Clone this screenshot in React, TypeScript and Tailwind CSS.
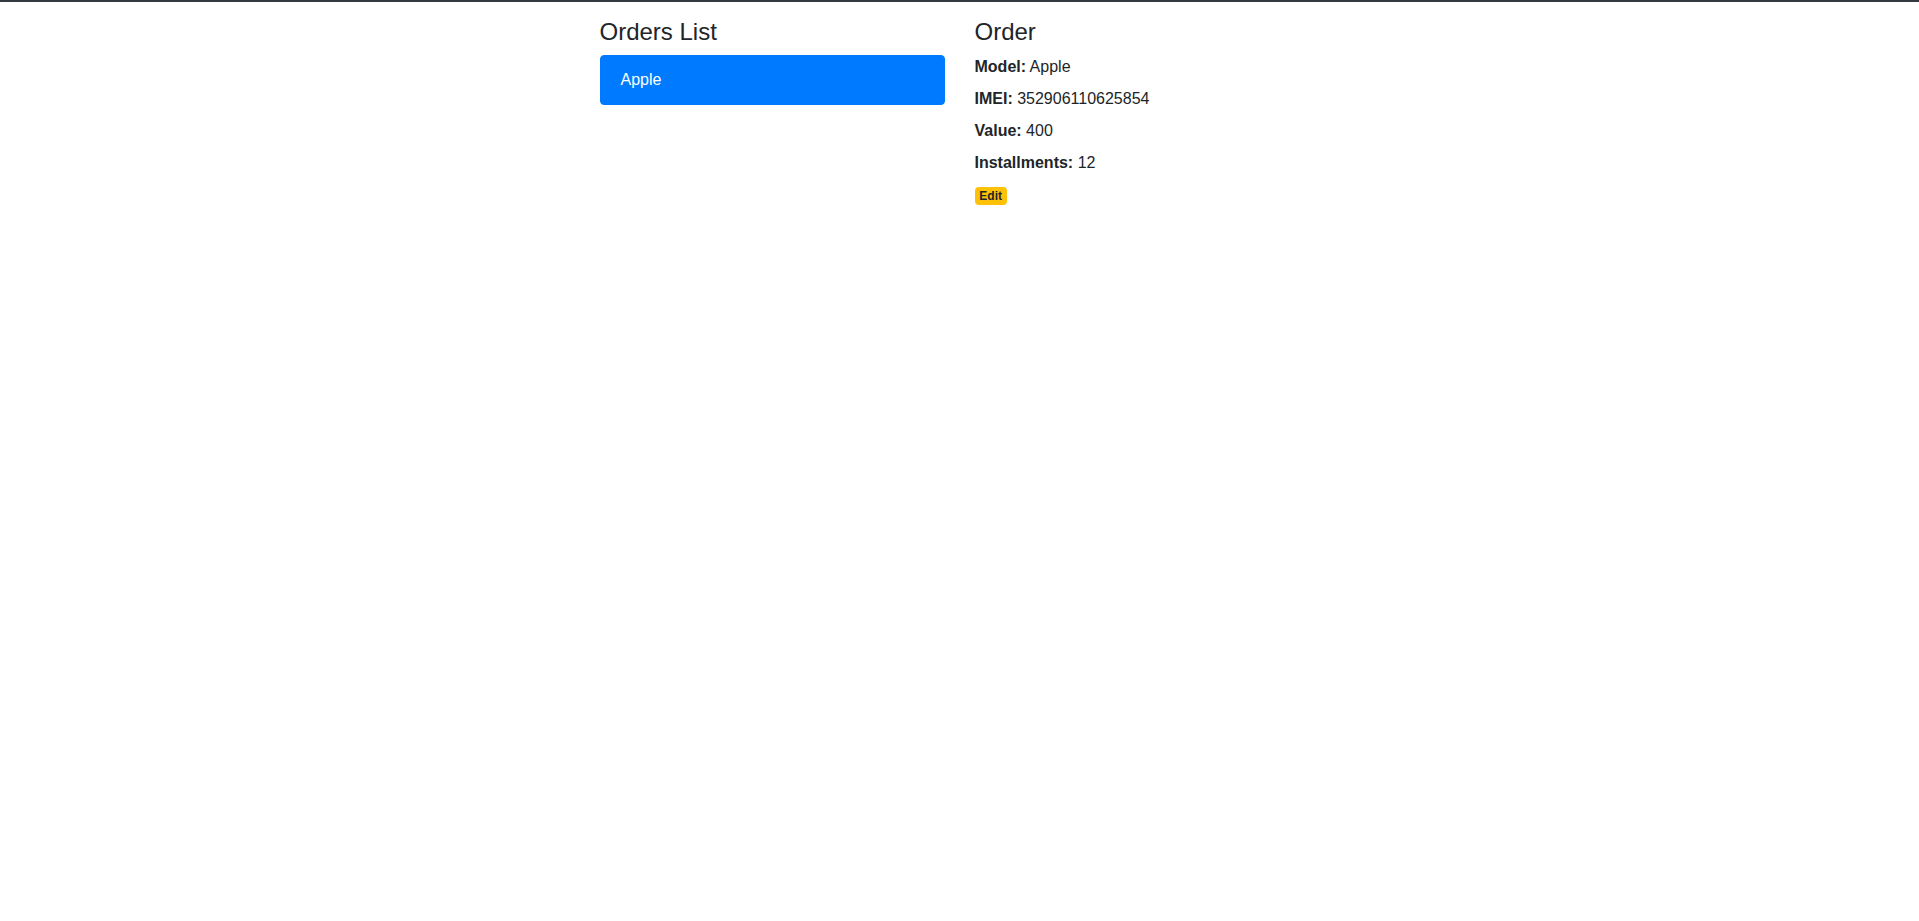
import React from "react";

export default function App() {
  return (
    <div className="min-h-screen bg-white font-['Liberation_Sans',Arial,sans-serif] text-base leading-6 text-[#212529]">
      <div className="h-[2px] bg-[#343a40]" />
      <div className="mx-auto mt-4 flex max-w-[750px]">
        <div className="w-1/2 px-[15px]">
          <h4 className="mb-2 text-2xl font-medium leading-[1.2]">Orders List</h4>
          <ul className="flex flex-col">
            <li className="rounded-[4px] border border-[#007bff] bg-[#007bff] px-5 py-3 text-white">
              Apple
            </li>
          </ul>
        </div>
        <div className="w-1/2 px-[15px]">
          <h4 className="mb-2 text-2xl font-medium leading-[1.2]">Order</h4>
          <div className="pb-2">
            <strong className="font-bold">Model:</strong> Apple
          </div>
          <div className="pb-2">
            <strong className="font-bold">IMEI:</strong> 352906110625854
          </div>
          <div className="pb-2">
            <strong className="font-bold">Value:</strong> 400
          </div>
          <div className="pb-2">
            <strong className="font-bold">Installments:</strong> 12
          </div>
          <button className="mt-[4px] inline-block rounded-[4px] bg-[#ffc107] px-[4.8px] py-[3px] text-xs font-bold leading-none text-[#212529]">
            Edit
          </button>
        </div>
      </div>
    </div>
  );
}
